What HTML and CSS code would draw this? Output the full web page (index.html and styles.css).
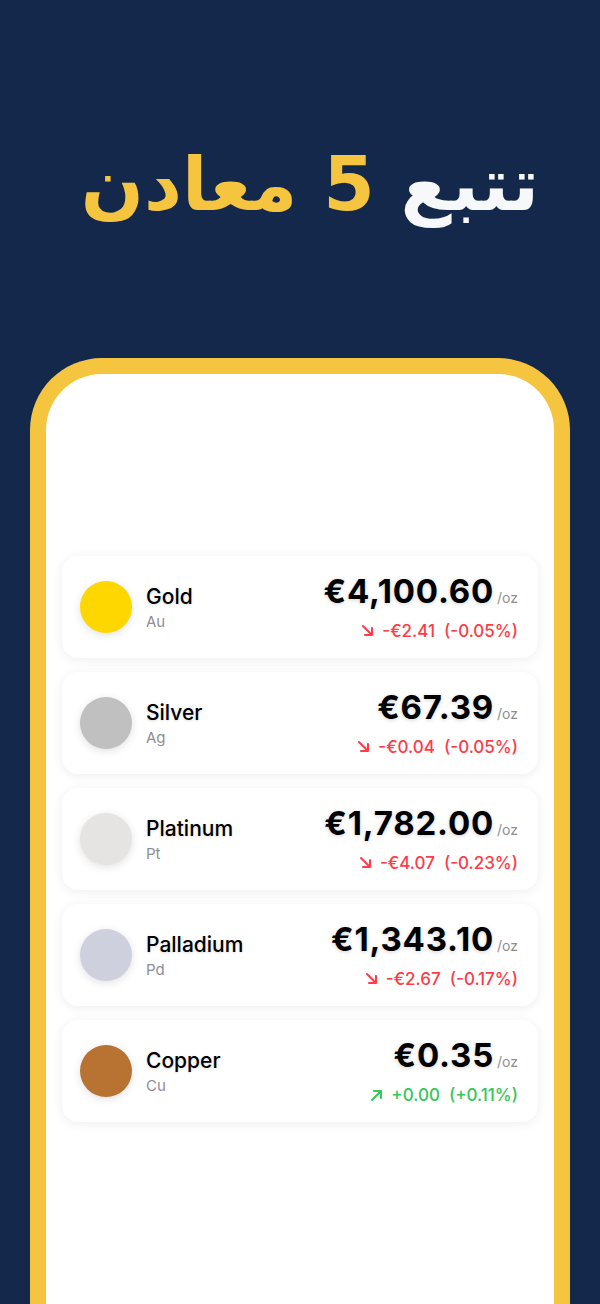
FILE: index.html
```html
<!DOCTYPE html>
<html lang="ar">
    <head>
        <meta charset="UTF-8" />
        <meta name="viewport" content="width=device-width, initial-scale=1" />
        <title>Metals</title>
        <link rel="stylesheet" href="styles.css">
    </head>
    <body>

        <header class="hero">
            <h1 dir="rtl"><span class="light">تتبع</span> <span class="accent">5 معادن</span></h1>
        </header>

        <main class="phone">
            <div class="screen">
                <div class="metal-list">

                    <div class="metal-card">
                        <div class="coin" style="background: #fed700"></div>
                        <div class="metal-name">
                            <span class="name">Gold</span>
                            <span class="symbol">Au</span>
                        </div>
                        <div class="metal-price">
                            <div class="price">€4,100.60<span class="unit">/oz</span></div>
                            <div class="change down">
                                <svg class="arrow" viewBox="0 0 14 14"><path d="M2 2 L11 11 M11 4 L11 11 L4 11" /></svg>
                                -€2.41 &nbsp;(-0.05%)
                            </div>
                        </div>
                    </div>

                    <div class="metal-card">
                        <div class="coin" style="background: #c0c0c0"></div>
                        <div class="metal-name">
                            <span class="name">Silver</span>
                            <span class="symbol">Ag</span>
                        </div>
                        <div class="metal-price">
                            <div class="price">€67.39<span class="unit">/oz</span></div>
                            <div class="change down">
                                <svg class="arrow" viewBox="0 0 14 14"><path d="M2 2 L11 11 M11 4 L11 11 L4 11" /></svg>
                                -€0.04 &nbsp;(-0.05%)
                            </div>
                        </div>
                    </div>

                    <div class="metal-card">
                        <div class="coin" style="background: #e5e4e2"></div>
                        <div class="metal-name">
                            <span class="name">Platinum</span>
                            <span class="symbol">Pt</span>
                        </div>
                        <div class="metal-price">
                            <div class="price">€1,782.00<span class="unit">/oz</span></div>
                            <div class="change down">
                                <svg class="arrow" viewBox="0 0 14 14"><path d="M2 2 L11 11 M11 4 L11 11 L4 11" /></svg>
                                -€4.07 &nbsp;(-0.23%)
                            </div>
                        </div>
                    </div>

                    <div class="metal-card">
                        <div class="coin" style="background: #ced0dd"></div>
                        <div class="metal-name">
                            <span class="name">Palladium</span>
                            <span class="symbol">Pd</span>
                        </div>
                        <div class="metal-price">
                            <div class="price">€1,343.10<span class="unit">/oz</span></div>
                            <div class="change down">
                                <svg class="arrow" viewBox="0 0 14 14"><path d="M2 2 L11 11 M11 4 L11 11 L4 11" /></svg>
                                -€2.67 &nbsp;(-0.17%)
                            </div>
                        </div>
                    </div>

                    <div class="metal-card">
                        <div class="coin" style="background: #b87333"></div>
                        <div class="metal-name">
                            <span class="name">Copper</span>
                            <span class="symbol">Cu</span>
                        </div>
                        <div class="metal-price">
                            <div class="price">€0.35<span class="unit">/oz</span></div>
                            <div class="change up">
                                <svg class="arrow" viewBox="0 0 14 14"><path d="M2 12 L11 3 M4 3 L11 3 L11 10" /></svg>
                                +0.00 &nbsp;(+0.11%)
                            </div>
                        </div>
                    </div>

                </div>
            </div>
        </main>

    </body>
</html>
```

FILE: styles.css
```css
* {
  box-sizing: border-box;
}
html, body {
  height: 100%;
}
body {
  margin: 0;
  background: #13284a;
  font-family: Inter, 'Liberation Sans', sans-serif;
  color: #000;
  overflow: hidden;
}
.hero {
  height: 358px;
  display: flex;
  justify-content: center;
  padding: 140px 0 0 20px;
}
.hero h1 {
  margin: 0;
  font-family: 'DejaVu Sans', sans-serif;
  font-weight: bold;
  font-size: 74px;
  line-height: 1.2;
}
.hero .light {
  color: #f7f8fa;
}
.hero .accent {
  color: #f5c53f;
}
.phone {
  margin: 0 30px;
  height: 946px;
  border: 16px solid #f5c53f;
  border-bottom: none;
  border-radius: 72px 72px 0 0;
  background: #f5c53f;
}
.screen {
  height: 100%;
  background: #fff;
  border-radius: 56px 56px 0 0;
  padding: 182px 16px 0;
}
.metal-list {
  display: flex;
  flex-direction: column;
  gap: 14px;
}
.metal-card {
  height: 102px;
  display: flex;
  align-items: center;
  padding: 0 20px 0 18px;
  background: #fff;
  border-radius: 16px;
  box-shadow: 0 2px 12px rgba(0, 0, 0, 0.07);
}
.coin {
  width: 52px;
  height: 52px;
  border-radius: 50%;
  flex-shrink: 0;
  box-shadow: 0 2px 8px rgba(0, 0, 0, 0.12);
}
.metal-name {
  flex-grow: 1;
  display: flex;
  flex-direction: column;
  margin-left: 14px;
}
.metal-name .name {
  font-size: 21px;
  font-weight: 500;
  line-height: 26px;
  margin-top: 2px;
  text-shadow: 0 1px 3px rgba(0, 0, 0, 0.15);
}
.metal-name .symbol {
  font-size: 15px;
  color: #8e8e93;
  line-height: 20px;
  margin-top: 2px;
}
.metal-price {
  text-align: right;
}
.price {
  font-size: 33px;
  font-weight: 700;
  line-height: 38px;
  letter-spacing: 0.8px;
  text-shadow: 0 1px 4px rgba(0, 0, 0, 0.18);
}
.price .unit {
  font-size: 14px;
  font-weight: 400;
  color: #8e8e93;
  margin-left: 3px;
  letter-spacing: 0;
  text-shadow: none;
}
.change {
  display: flex;
  justify-content: flex-end;
  align-items: center;
  gap: 7px;
  font-size: 17px;
  font-weight: 500;
  line-height: 22px;
  margin-top: 3px;
}
.change .arrow {
  width: 14px;
  height: 14px;
  fill: none;
  stroke: currentColor;
  stroke-width: 2;
  stroke-linecap: round;
  stroke-linejoin: round;
}
.down {
  color: #ff3b47;
}
.up {
  color: #34c759;
}
```
